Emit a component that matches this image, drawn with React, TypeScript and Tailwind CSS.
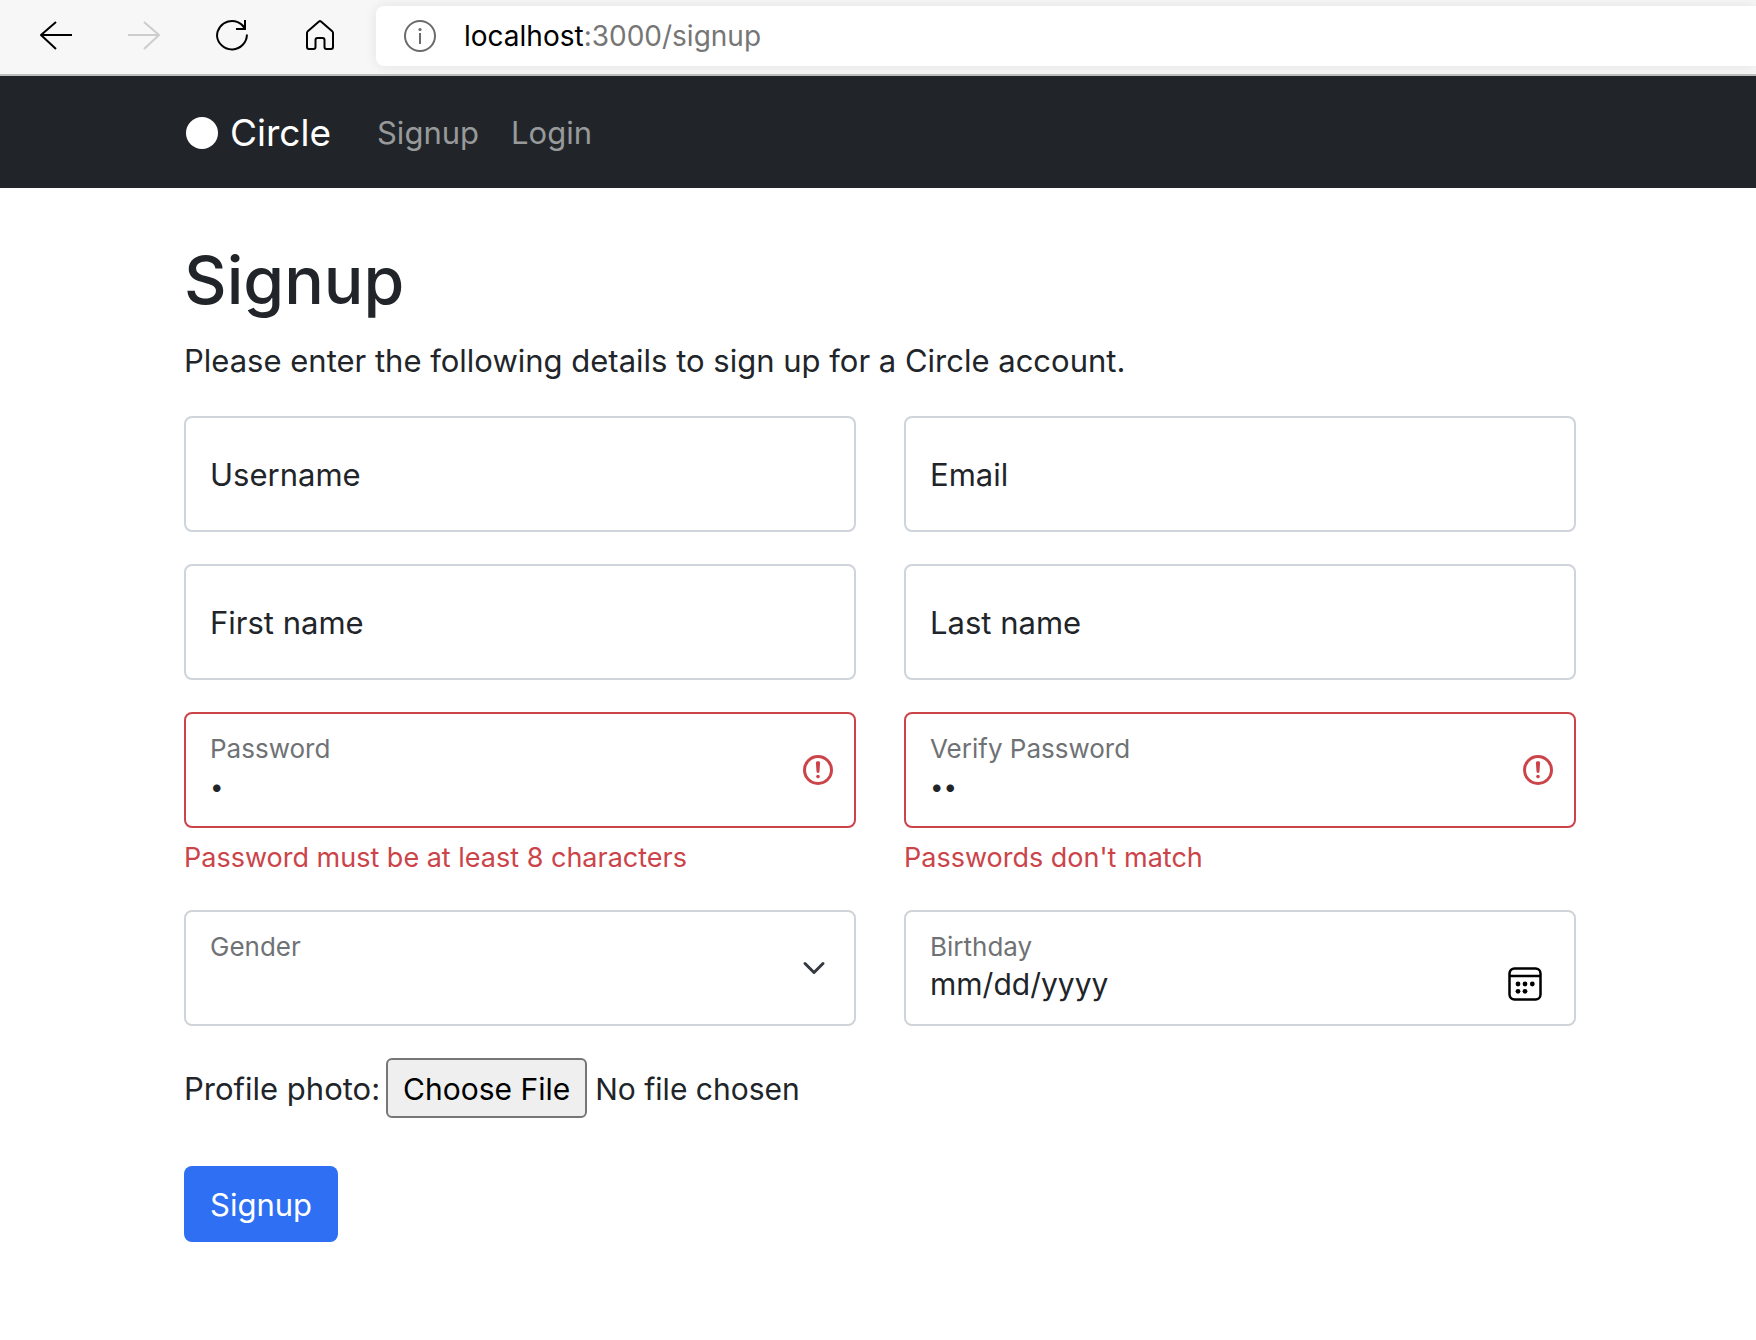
import type { ReactNode } from 'react';

function BackIcon() {
  return (
    <svg width="36" height="36" viewBox="0 0 36 36" fill="none" stroke="currentColor" strokeWidth="2" aria-hidden="true">
      <path d="M34 17H3M18 4 3 17l15 14" strokeLinejoin="round" />
    </svg>
  );
}

function ForwardIcon() {
  return (
    <svg width="36" height="36" viewBox="0 0 36 36" fill="none" stroke="currentColor" strokeWidth="2" aria-hidden="true">
      <path d="M2 17h31M18 4l15 13-15 14" strokeLinejoin="round" />
    </svg>
  );
}

function ReloadIcon() {
  return (
    <svg width="36" height="36" viewBox="0 0 36 36" fill="none" stroke="currentColor" strokeWidth="2" aria-hidden="true">
      <path d="M32.920 16.500A15 15 0 0 1 3 18A15 15 0 0 1 30.990 10.500" />
      <path d="M31 2v9h-9" />
    </svg>
  );
}

function HomeIcon() {
  return (
    <svg width="36" height="36" viewBox="0 0 36 36" fill="none" stroke="currentColor" strokeWidth="2" strokeLinejoin="round" aria-hidden="true">
      <path d="M17 3.6Q18 2.6 19 3.6L30.500 13.600Q31 14.100 31 15V29Q31 31 29 31H24.500Q22.500 31 22.500 29V22Q22.500 20 20.500 20H15.500Q13.500 20 13.500 22V29Q13.500 31 11.500 31H7Q5 31 5 29V15Q5 14.100 5.500 13.600Z" />
    </svg>
  );
}

function InfoIcon() {
  return (
    <svg width="32" height="32" viewBox="0 0 32 32" className="shrink-0 text-[#6b6b6b]" aria-hidden="true">
      <circle cx="16" cy="16" r="15" fill="none" stroke="currentColor" strokeWidth="2" />
      <circle cx="16" cy="9.500" r="1.600" fill="currentColor" />
      <path d="M16 13v11" stroke="currentColor" strokeWidth="2" />
    </svg>
  );
}

function AlertIcon() {
  return (
    <svg
      width="36"
      height="36"
      viewBox="0 0 12 12"
      fill="none"
      stroke="currentColor"
      className="pointer-events-none absolute inset-y-0 right-5 my-auto text-[#cb444a]"
      aria-hidden="true"
    >
      <circle cx="6" cy="6" r="4.500" />
      <path strokeLinejoin="round" d="M5.800 3.600h.4L6 6.500z" />
      <circle cx="6" cy="8.200" r=".6" fill="currentColor" stroke="none" />
    </svg>
  );
}

function ChevronIcon() {
  return (
    <svg
      width="32"
      height="24"
      viewBox="0 0 16 16"
      fill="none"
      stroke="#343a40"
      strokeWidth="2"
      strokeLinecap="round"
      strokeLinejoin="round"
      className="pointer-events-none absolute inset-y-0 right-[26px] my-auto"
      aria-hidden="true"
    >
      <path d="M2 5l6 6 6-6" />
    </svg>
  );
}

function CalendarIcon() {
  return (
    <svg width="34" height="34" viewBox="0 0 34 34" className="pointer-events-none absolute right-[34px] bottom-[25px]" aria-hidden="true">
      <rect x="1.500" y="1.500" width="31" height="31" rx="5" fill="none" stroke="#000" strokeWidth="2.500" />
      <path d="M1.500 9h31" stroke="#000" strokeWidth="2.500" />
      <circle cx="10" cy="17" r="2.400" />
      <circle cx="17" cy="17" r="2.400" />
      <circle cx="24.300" cy="17" r="2.400" />
      <circle cx="10" cy="24.300" r="2.400" />
      <circle cx="17" cy="24.300" r="2.400" />
    </svg>
  );
}

function ToolbarButton({ label, disabled, children }: { label: string; disabled?: boolean; children: ReactNode }) {
  return (
    <button
      type="button"
      aria-label={label}
      disabled={disabled}
      className="flex h-[72px] w-[88px] items-center justify-center text-black disabled:text-[#cdcdcd]"
    >
      {children}
    </button>
  );
}

function BrowserBar() {
  return (
    <div className="flex h-[76px] items-start overflow-hidden border-b-2 border-[#bbbebe] bg-[#f7f7f7] pl-3">
      <ToolbarButton label="Back">
        <BackIcon />
      </ToolbarButton>
      <ToolbarButton label="Forward" disabled>
        <ForwardIcon />
      </ToolbarButton>
      <ToolbarButton label="Reload">
        <ReloadIcon />
      </ToolbarButton>
      <ToolbarButton label="Home">
        <HomeIcon />
      </ToolbarButton>
      <div className="mt-1.5 ml-3 flex h-[60px] flex-1 items-center gap-7 rounded-l-lg bg-white pl-7 shadow-[0_0_14px_rgba(0,0,0,0.09)]">
        <InfoIcon />
        <div className="text-[28px] leading-[60px] text-[#767676]">
          <span className="text-black">localhost</span>:3000/signup
        </div>
      </div>
    </div>
  );
}

function Navbar() {
  return (
    <nav className="bg-[#212529] pt-[17px] pb-[15px] pl-1">
      <div className="mx-auto flex h-20 max-w-[1440px] items-center px-6">
        <a href="#home" className="mr-[30px] flex items-center gap-3 pl-0.5 text-[37px] text-white">
          <span className="size-8 rounded-full bg-white" />
          Circle
        </a>
        <a href="#signup" className="px-4 text-[#97999b]">
          Signup
        </a>
        <a href="#login" className="px-4 text-[#97999b]">
          Login
        </a>
      </div>
    </nav>
  );
}

const control = 'block h-[116px] w-full appearance-none rounded-lg border-2 bg-white px-6 pt-[52px] pb-5 leading-10 outline-none';

function TextField({ id, label, type = 'text' }: { id: string; label: string; type?: string }) {
  return (
    <div className="relative">
      <input id={id} type={type} className={`${control} peer border-[#ced4da]`} placeholder=" " />
      <label
        htmlFor={id}
        className="pointer-events-none absolute top-[35px] left-[26px] leading-[48px] peer-focus:top-[17px] peer-focus:text-[26px] peer-focus:leading-10"
      >
        {label}
      </label>
    </div>
  );
}

function FloatingLabel({ id, children }: { id: string; children: ReactNode }) {
  return (
    <label htmlFor={id} className="pointer-events-none absolute top-[17px] left-[26px] text-[26px] leading-10 text-[#6f7275]">
      {children}
    </label>
  );
}

function PasswordField({ id, label, value, error }: { id: string; label: string; value: string; error: string }) {
  return (
    <div>
      <div className="relative">
        <input
          id={id}
          type="password"
          defaultValue={value}
          aria-invalid="true"
          aria-describedby={`${id}-error`}
          className={`${control} border-[#cb444a] text-[24px]`}
        />
        <FloatingLabel id={id}>{label}</FloatingLabel>
        <AlertIcon />
      </div>
      <p id={`${id}-error`} className="mt-2.5 text-[27px] leading-10 text-[#cb444a]">
        {error}
      </p>
    </div>
  );
}

function SignupForm() {
  return (
    <form onSubmit={(event) => event.preventDefault()}>
      <div className="grid grid-cols-2 gap-x-12 gap-y-8">
        <TextField id="username" label="Username" />
        <TextField id="email" label="Email" type="email" />
        <TextField id="first-name" label="First name" />
        <TextField id="last-name" label="Last name" />
        <PasswordField id="password" label="Password" value="a" error="Password must be at least 8 characters" />
        <PasswordField id="verify-password" label="Verify Password" value="ab" error="Passwords don't match" />
        <div className="relative">
          <select id="gender" defaultValue="" className={`${control} border-[#ced4da]`}>
            <option value=""></option>
            <option value="female">Female</option>
            <option value="male">Male</option>
            <option value="other">Other</option>
          </select>
          <FloatingLabel id="gender">Gender</FloatingLabel>
          <ChevronIcon />
        </div>
        <div className="relative">
          <input
            id="birthday"
            type="date"
            className={`${control} border-[#ced4da] text-[30px] [&::-webkit-calendar-picker-indicator]:opacity-0 [&::-webkit-datetime-edit-text]:p-0 [&::-webkit-datetime-edit-month-field]:p-0 [&::-webkit-datetime-edit-day-field]:p-0 [&::-webkit-datetime-edit-year-field]:p-0`}
          />
          <FloatingLabel id="birthday">Birthday</FloatingLabel>
          <CalendarIcon />
        </div>
      </div>
      <div className="mt-8 flex items-center gap-1.5">
        <label htmlFor="photo" className="pt-0.5">
          Profile photo:
        </label>
        <input
          id="photo"
          type="file"
          className="h-[60px] flex-1 text-[30px] file:mr-2 file:h-[60px] file:rounded-md file:border-2 file:border-solid file:border-[#767676] file:bg-[#efefef] file:px-[15px] file:pt-0.5 file:text-black"
        />
      </div>
      <button type="submit" className="mt-12 h-[76px] rounded-lg bg-[#2e6ff3] px-[26px] pt-0.5 text-white">
        Signup
      </button>
    </form>
  );
}

export default function App() {
  return (
    <div className="min-h-screen bg-white font-['Inter',sans-serif] text-[31px] text-[#212529]">
      <BrowserBar />
      <Navbar />
      <main className="pl-1">
        <div className="mx-auto max-w-[1440px] px-6 pt-12">
          <h1 className="mb-3 text-[66px] leading-[88px] font-medium">Signup</h1>
          <p className="mb-[30px] leading-[50px]">Please enter the following details to sign up for a Circle account.</p>
          <SignupForm />
        </div>
      </main>
    </div>
  );
}
